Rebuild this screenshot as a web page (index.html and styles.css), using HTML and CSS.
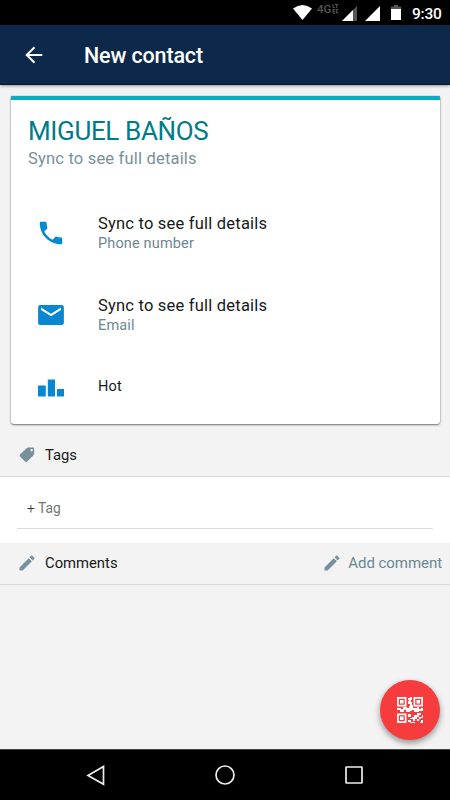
FILE: index.html
```html
<!DOCTYPE html>
<html lang="en">
<head>
<meta charset="utf-8">
<title>New contact</title>
<link rel="stylesheet" href="styles.css">
</head>
<body>
<div class="screen">
  <div class="status">
    <svg class="wifi" width="19" height="15" viewBox="0 0 19 15"><path d="M0 3.6Q9.5-3.6 19 3.6L9.5 15Z" fill="#fff"/></svg>
    <span class="network">4G</span>
    <svg class="lte" width="7" height="10" viewBox="0 0 7 10" fill="none" stroke="#555"><path d="M1 0V3.5H3M3 .5H6.5M4.7 .5V4M3.5 5.5H1V9H3.5M1 7.2H3M6.5 5.5H4.5V9H6.5"/></svg>
    <svg class="signal" width="15" height="15" viewBox="0 0 15 15"><path d="M15 0V15H0Z" fill="#555"/><path d="M11 4V15H0Z" fill="#fff"/></svg>
    <svg class="signal-full" width="15" height="15" viewBox="0 0 15 15"><path d="M15 0V15H0Z" fill="#fff"/></svg>
    <svg class="battery" width="10" height="15" viewBox="0 0 10 15"><path d="M3 0H7V1.5H10V4H0V1.5H3Z" fill="#555"/><path d="M0 4H10V15H0Z" fill="#fff"/></svg>
    <span class="time">9:30</span>
  </div>
  <header class="appbar">
    <svg class="back" width="18" height="18" viewBox="0 0 18 18" fill="none" stroke="#fff" stroke-width="2"><path d="M17.3 9H1.7M9.5 1.2L1.7 9L9.5 16.8"/></svg>
    <h1>New contact</h1>
  </header>
  <main class="content">
    <section class="card">
      <h2 class="name">MIGUEL BAÑOS</h2>
      <p class="sub">Sync to see full details</p>
      <div class="row phone">
        <svg width="30" height="30" viewBox="0 0 24 24" fill="#0588d1"><path d="M6.62 10.79c1.44 2.83 3.76 5.14 6.59 6.59l2.2-2.2c.27-.27.67-.36 1.02-.24 1.12.37 2.33.57 3.57.57.55 0 1 .45 1 1V20c0 .55-.45 1-1 1-9.39 0-17-7.61-17-17 0-.55.45-1 1-1h3.5c.55 0 1 .45 1 1 0 1.25.2 2.45.57 3.57.11.35.03.74-.25 1.02l-2.2 2.2z"/></svg>
        <div><p class="value">Sync to see full details</p><p class="label">Phone number</p></div>
      </div>
      <div class="row email">
        <svg width="30" height="30" viewBox="0 0 24 24" fill="#0588d1"><path d="M20.6 4H3.4Q1.7 4 1.7 5.7V18.3Q1.7 20 3.4 20H20.6Q22.3 20 22.3 18.3V5.7Q22.3 4 20.6 4zM20 8l-8 5-8-5V6l8 5 8-5v2z"/></svg>
        <div><p class="value">Sync to see full details</p><p class="label">Email</p></div>
      </div>
      <div class="row rating">
        <svg width="30" height="18" viewBox="0 0 30 18" fill="#0588d1"><path d="M2 6.5H9.8V17.5H2ZM11.8.5H19V17.5H11.8ZM21 10H28V17.5H21Z"/></svg>
        <p class="hot">Hot</p>
      </div>
    </section>
    <div class="section-head tags-head">
      <svg width="16" height="16" viewBox="0 0 16 16"><path d="M7.6 1.3Q8.3.6 9.2.6H13.8Q15.2.6 15.2 2V6.6Q15.2 7.5 14.5 8.2L8 14.7Q7 15.5 6 14.6L1 9.5Q.2 8.5 1 7.6ZM12.6 2A1.2 1.2 0 1 0 12.6 4.4 1.2 1.2 0 1 0 12.6 2Z" fill="#78909c" fill-rule="evenodd"/></svg>
      <h3>Tags</h3>
    </div>
    <div class="tag-area"><div class="tag-input"><span class="plus">+</span> Tag</div></div>
    <div class="section-head comments-head">
      <svg width="20" height="20" viewBox="0 0 24 24" fill="#78909c"><path d="M3 17.25V21h3.75L17.81 9.94l-3.75-3.75L3 17.25zM20.71 7.04a1 1 0 0 0 0-1.41l-2.34-2.34a1 1 0 0 0-1.41 0l-1.83 1.83 3.75 3.75 1.83-1.83z"/></svg>
      <h3>Comments</h3>
      <a class="add"><svg width="20" height="20" viewBox="0 0 24 24" fill="#78909c"><path d="M3 17.25V21h3.75L17.81 9.94l-3.75-3.75L3 17.25zM20.71 7.04a1 1 0 0 0 0-1.41l-2.34-2.34a1 1 0 0 0-1.41 0l-1.83 1.83 3.75 3.75 1.83-1.83z"/></svg><span>Add comment</span></a>
    </div>
  </main>
  <div class="fab">
    <svg width="26" height="26" viewBox="0 0 26 26">
      <g fill="none" stroke="#fff" stroke-width="1.7"><path d="M.9.9H8.6V8.6H.9ZM17.4.9H25.1V8.6H17.4ZM.9 17.4H8.6V25.1H.9Z"/></g>
      <g fill="#fff"><path d="M3 3H6.5V6.5H3ZM19.5 3H23V6.5H19.5ZM3 19.5H6.5V23H3Z"/><path d="M11 1H13V0H15V3H14V5H15V8H16V11H20V10H22V12H24V11H26V14H22V15H17V13H15V14H13V15H9V13H7V15H3V13H0V11H4V12H6V10H10V11H12V9H13V7H11V4H12V3H11ZM11 17H14V20H11ZM15 20H17V18H20V16H24V18H22V20H20V22H18V24H16V22H13V21H15ZM22 20H25V18H26V21H24V22H22V24H20V22H22ZM24 23H26V26H23V25H24ZM11 23H14V25H18V26H13V25H11Z"/></g>
    </svg>
  </div>
  <nav class="navbar">
    <svg width="20" height="21" viewBox="0 0 20 21"><path d="M17.5 1.5V19.2L2 10.4Z"/></svg>
    <svg width="22" height="22" viewBox="0 0 22 22"><circle cx="11" cy="11" r="9"/></svg>
    <svg width="20" height="20" viewBox="0 0 20 20"><rect x="2" y="2" width="16" height="16" rx=".5"/></svg>
  </nav>
</div>
</body>
</html>
```
FILE: styles.css
```css
* { box-sizing: border-box; margin: 0; padding: 0; }
body { font-family: Roboto, sans-serif; color: #181818; }
h1, h2, h3 { font-weight: 400; }
svg { display: block; flex: none; }
.screen { position: relative; display: flex; flex-direction: column; width: 450px; height: 800px; overflow: hidden; background: #f3f3f3; }
.status { display: flex; align-items: flex-start; height: 25px; padding-left: 293px; background: #000; color: #fff; }
.wifi { margin-top: 5px; }
.network { width: 15px; margin: 3px 0 0 5px; font-size: 11.5px; line-height: 12px; font-weight: 500; color: #555; }
.lte { margin-top: 4px; }
.signal { margin: 6px 0 0 3px; }
.signal-full { margin: 6px 0 0 8px; }
.battery { margin: 5px 0 0 11px; }
.time { margin-left: 11px; font-size: 15.5px; line-height: 28px; font-weight: 500; letter-spacing: -.2px; white-space: nowrap; }
.appbar { display: flex; align-items: center; height: 60px; padding-left: 25px; background: #0c294b; border-bottom: 1px solid #061831; box-shadow: 0 1px 3px rgba(0,0,0,.4); z-index: 1; color: #fff; }
.appbar h1 { margin-left: 41px; font-size: 21.5px; line-height: 30px; font-weight: 500; letter-spacing: -.15px; padding-top: 2px; }
.content { flex: 1; padding-top: 11px; }
.card { width: 429px; height: 328px; margin-left: 11px; padding: 17px 17px 0; background: #fff; border-top: 4px solid #07adc2; border-radius: 1px 1px 3px 3px; box-shadow: 0 1px 2px rgba(0,0,0,.5), 0 0 2px rgba(0,0,0,.2); }
.name { font-size: 26px; line-height: 28px; color: #007c89; letter-spacing: -.35px; white-space: nowrap; }
.sub { margin-top: 2px; font-size: 16.5px; line-height: 24px; letter-spacing: .19px; color: #78909c; }
.row { display: flex; align-items: center; margin-left: 8px; }
.row > :last-child { margin-left: 32px; }
.phone { margin-top: 41px; height: 42px; }
.email { margin-top: 40px; height: 42px; }
.rating { margin-top: 38px; height: 24px; }
.rating svg { margin-top: 4px; }
.value { padding-top: 2px; font-size: 16.5px; line-height: 20px; letter-spacing: .21px; white-space: nowrap; }
.label { font-size: 14.5px; line-height: 20px; letter-spacing: .15px; color: #6b8794; }
.hot { font-size: 14.5px; letter-spacing: .2px; }
.section-head { display: flex; align-items: center; }
.section-head h3 { font-size: 14.8px; line-height: 20px; }
.tags-head { height: 53px; padding: 9px 0 0 19px; border-bottom: 1px solid #dadada; }
.tags-head h3 { margin-left: 10px; }
.tag-area { height: 66px; padding: 20px 17px 0; background: #fff; }
.tag-input { height: 32px; padding-left: 10px; border-bottom: 1px solid #ddd; font-size: 13.8px; line-height: 23px; color: #757575; }
.plus { color: #333; font-weight: 300; }
.comments-head { height: 42px; padding: 0 8px 1px 17px; border-bottom: 1px solid #dadada; }
.comments-head h3 { margin-left: 8px; }
.add { display: flex; align-items: center; margin-left: auto; gap: 6px; font-size: 15px; letter-spacing: -.05px; color: #6b8794; }
.fab { position: absolute; left: 380px; top: 680px; width: 60px; height: 60px; display: grid; place-items: center; border-radius: 50%; background: #f73c3e; box-shadow: 0 3px 6px rgba(0,0,0,.4); }
.navbar { display: flex; align-items: center; height: 51px; padding-left: 86px; background: #000; border-top: 1px solid #444; z-index: 1; }
.navbar svg { fill: none; stroke: #eee; stroke-width: 1.7; }
.navbar svg + svg { margin-left: 108px; }
```
